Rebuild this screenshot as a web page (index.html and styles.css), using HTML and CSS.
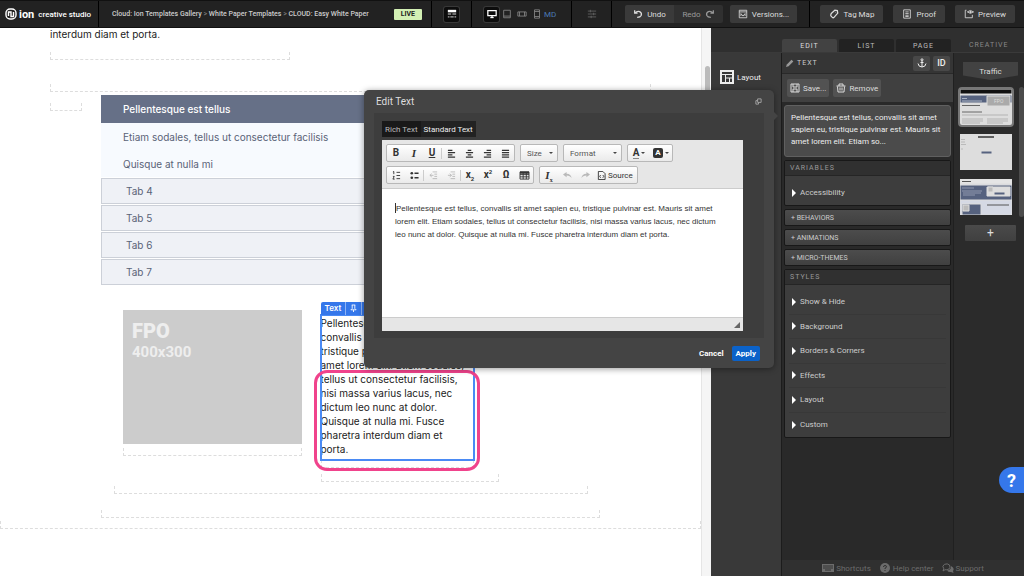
FILE: index.html
```html
<!DOCTYPE html>
<html lang="en">
<head>
  <meta charset="UTF-8" />
  <meta name="viewport" content="width=device-width, initial-scale=1.0"/>
  <title>ion creative studio</title>
  <link rel="stylesheet" href="styles.css">
</head>
<body>

  <!-- Top bar -->
  <header class="topbar">
    <div class="brand">
      <svg class="brand-mark" viewBox="0 0 12 12"><rect x="1" y="1" width="10" height="10" rx="4"/><path d="M3.500 8V4h2.500v4M6 4v4.500h2.500V4"/></svg>
      <b class="brand-name">ion</b>
      <span class="brand-sub">creative studio</span>
    </div>
    <div class="crumbs">
      <nav><a href="#">Cloud: Ion Templates Gallery</a> <i>&gt;</i> <a href="#">White Paper Templates</a> <i>&gt;</i> <a href="#">CLOUD: Easy White Paper</a></nav>
      <span class="live">LIVE</span>
    </div>
    <div class="bar-group group-view">
      <button class="icon-btn active" aria-label="Page view"><svg viewBox="0 0 12 12"><path class="fill" d="M1 1h10v3H1z"/><path d="M1 6h4M6.500 6H11M1 9.500h2M4 9.500h4M9 9.500h2"/></svg></button>
    </div>
    <div class="bar-group group-devices">
      <button class="icon-btn active" aria-label="Desktop"><svg viewBox="0 0 12 12"><path class="mid" d="M1 2h10v6H1zM6 8v2"/><path class="fill" d="M4 9.500h4v1.500H4z"/></svg></button>
      <button class="icon-btn" aria-label="Tablet"><svg viewBox="0 0 12 12"><path d="M2 1.500h8v9H2zM2 8.500h8"/></svg></button>
      <button class="icon-btn" aria-label="Phone landscape"><svg viewBox="0 0 12 12"><path d="M1 3.500h10v5H1zM3 3.500v5M9 3.500v5"/></svg></button>
      <button class="icon-btn" aria-label="Phone"><svg viewBox="0 0 12 12"><path d="M3 1h6v10H3zM3 3h6M3 9h6"/></svg></button>
      <span class="size">MD</span>
    </div>
    <div class="bar-group group-settings">
      <button class="icon-btn" aria-label="Settings"><svg viewBox="0 0 12 12"><path d="M1 2.500h10M1 6h10M1 9.500h10M4 1v3M8 4.500v3M5 8v3"/></svg></button>
    </div>
    <div class="bar-group group-history">
      <div class="joined">
        <button class="bar-btn"><svg viewBox="0 0 12 12"><path class="mid" d="M2 1.500v3.500h3.500M2.500 4.800Q5 2 8 3.200q3 1.600 1.800 4.600Q8.800 10 5 10"/></svg>Undo</button>
        <button class="bar-btn dim">Redo<svg viewBox="0 0 12 12"><path class="mid" d="M10 1.500v3.500H6.500M9.500 4.800Q7 2 4 3.200 1 4.800 2.200 7.800 3.200 10 7 10"/></svg></button>
      </div>
      <button class="bar-btn versions"><svg viewBox="0 0 12 12"><path d="M1.500 1.500h9v9h-9zM1.500 3.500h9M3.500 5.500L6 8.500 8.500 5.500M3.500 8.500v-3M8.500 8.500v-3"/></svg>Versions...</button>
    </div>
    <div class="bar-group group-actions">
      <button class="bar-btn"><svg viewBox="0 0 12 12"><path class="mid" d="M3 5l4-3.500 3 .5.500 3L6 10q-1 1-2 0L2.500 8.500q-1-1 .5-3.500zM8 4h.5"/></svg>Tag Map</button>
      <button class="bar-btn"><svg viewBox="0 0 12 12"><path d="M2 1h8v10H2zM4 3.500h4M4 5.500h4M4 7.500h4M4 9h4"/></svg>Proof</button>
      <button class="bar-btn"><svg viewBox="0 0 12 12"><path d="M3 1.500H1.500v9h8.500V7M4 3.500q3.500-3.500 7.500 0-4 3.500-7.500 0z"/><circle class="fill" cx="7.800" cy="3.500" r="1.200"/></svg>Preview</button>
    </div>
  </header>

  <div class="workspace">
    <!-- Page being edited -->
    <main class="canvas">
      <div class="page">
        <p class="lead">interdum diam et porta.</p>
        <div class="slot slot-short"></div>
        <div class="slot slot-wide"></div>
        <div class="page-grid">
          <div class="slot slot-side"></div>
          <div class="page-main">
            <div class="accordion">
              <h2>Pellentesque est tellus</h2>
              <a href="#">Etiam sodales, tellus ut consectetur facilisis</a>
              <a href="#">Quisque at nulla mi</a>
              <button>Tab 4</button>
              <button>Tab 5</button>
              <button>Tab 6</button>
              <button>Tab 7</button>
            </div>
            <div class="columns">
              <div>
                <div class="fpo"><b>FPO</b><span>400x300</span></div>
                <div class="slot slot-under"></div>
              </div>
              <div>
                <div class="selected">
                  <div class="selected-bar"><span>Text</span><span><svg viewBox="0 0 8 10"><path d="M2 1h4M2.500 1v4L1 6.500h6L5.500 5V1M4 6.500V9"/></svg></span><span></span></div>
                  <p>Pellentesque est tellus,<br>convallis sit amet sapien eu,<br>tristique pulvinar est. Mauris sit<br>amet lorem elit. Etiam sodales,<br>tellus ut consectetur facilisis,<br>nisi massa varius lacus, nec<br>dictum leo nunc at dolor.<br>Quisque at nulla mi. Fusce<br>pharetra interdum diam et<br>porta.</p>
                  <div class="callout"></div>
                </div>
                <div class="slot slot-text"></div>
                <div class="slot slot-column"></div>
              </div>
            </div>
            <div class="slot slot-inner"></div>
            <div class="slot slot-outer"></div>
          </div>
        </div>
      </div>
      <div class="slot slot-page"></div>
    </main>
    <div class="scrollbar"><div class="thumb"></div></div>

    <!-- Side panels -->
    <aside class="side">
      <div class="side-head">
        <div class="tabs">
          <button class="active">EDIT</button>
          <button>LIST</button>
          <button>PAGE</button>
        </div>
        <span class="creative-title">CREATIVE</span>
      </div>
      <div class="tools">
        <button class="tool"><svg viewBox="0 0 14 14"><path d="M1 1h12v12H1z"/><path class="thin" d="M1 4.500h12M5.500 4.500V13M5.500 8H13M9.500 8v5"/></svg>Layout</button>
      </div>
      <section class="panel">
        <div class="panel-title">
          <svg class="pencil" viewBox="0 0 8 8"><path class="fill" d="M0 8l.8-2.600L5.500.8l1.800 1.700L2.600 7.200z"/></svg>
          <span>TEXT</span>
          <button aria-label="Anchor"><svg viewBox="0 0 10 10"><circle cx="5" cy="1.800" r="1"/><path d="M5 3v6M3.500 4.500h3M1 5.500Q1.500 9 5 9t4-3.500"/></svg></button>
          <button>ID</button>
        </div>
        <div class="panel-actions">
          <button><svg viewBox="0 0 10 10"><path d="M1 1h8v8H1zM3 1v3h4V1M3 9V6h4v3"/></svg>Save...</button>
          <button><svg viewBox="0 0 10 10"><path d="M.5 3h9M3 3V1h4v2M1.500 3.500L2 9h6l.5-5.500M4 4.500v3M6 4.500v3"/></svg>Remove</button>
        </div>
        <div class="panel-body">
          <p class="excerpt">Pellentesque est tellus, convallis sit amet sapien eu, tristique pulvinar est. Mauris sit amet lorem elit. Etiam so...</p>
          <div class="box">
            <h3>VARIABLES</h3>
            <div class="box-rows one"><button>Accessibility</button></div>
          </div>
          <button class="bar-row">+ BEHAVIORS</button>
          <button class="bar-row">+ ANIMATIONS</button>
          <button class="bar-row">+ MICRO-THEMES</button>
          <div class="box">
            <h3>STYLES</h3>
            <div class="box-rows">
              <button>Show &amp; Hide</button>
              <button>Background</button>
              <button>Borders &amp; Corners</button>
              <button>Effects</button>
              <button>Layout</button>
              <button>Custom</button>
            </div>
          </div>
        </div>
      </section>
      <section class="creative">
        <button class="traffic">Traffic</button>
        <div class="thumbs">
          <button class="thumb-page current" aria-label="Page 1">
            <svg viewBox="0 0 52 36"><path fill="#ddd" d="M0 0h52v36H0z"/><path fill="#111" d="M0 0h52v5H0z"/><path fill="#56627f" d="M0 6h52v8H0z"/><path fill="#aaa" d="M27 7h23v10H27z"/><path stroke="#aab3c4" d="M2 9.500h5M2 12h20"/><path stroke="#666" d="M2 16.500h18M2 23h20"/><path stroke="#999" stroke-width=".6" d="M2 26h46M2 30h21M2 32h21M2 34h18M27 30h21M27 32h21M27 34h16"/><text class="thumb-label" x="34" y="14">FPO</text></svg>
          </button>
          <button class="thumb-page" aria-label="Page 2">
            <svg viewBox="0 0 52 36"><path fill="#ddd" d="M0 0h52v36H0z"/><path stroke="#333" stroke-width="1.500" d="M18 3h16"/><path stroke="#aaa" stroke-width=".7" d="M1 5.500h4M1 8h4M1 10.500h5M1 15h2"/><path fill="#56627f" d="M21 17h11v3H21z"/></svg>
          </button>
          <button class="thumb-page" aria-label="Page 3">
            <svg viewBox="0 0 52 36"><path fill="#d5d9e4" d="M0 0h52v36H0z"/><path fill="#e5e5e5" d="M0 0h52v5H0z"/><path fill="#56627f" d="M0 6h52v15H0zM2 25h19v11H2z"/><path fill="#ddd" d="M27 8h23v9H27z"/><path fill="#bbb" d="M28 8h5v5h-5zM3 26h6v6H3z"/><path fill="#56627f" d="M34 13h11v3H34z"/><path stroke="#aab3c4" stroke-width=".7" d="M2 9h12M2 12h20M3 14h18M3 16h12"/><path stroke="#555" d="M2 2.500h9M27 26h22"/></svg>
          </button>
        </div>
        <button class="add-page" aria-label="Add page">+</button>
        <div class="side-thumb"></div>
      </section>
      <footer class="side-foot">
        <a href="#"><svg viewBox="0 0 12 8"><path class="fill" d="M0 0h12v8H0z"/><path class="cut" d="M1 2h10M1 4h10M3 6h6"/></svg>Shortcuts</a>
        <a href="#"><svg viewBox="0 0 10 10"><circle class="fill" cx="5" cy="5" r="5"/><path class="cut" d="M3.500 4q0-1.500 1.500-1.500t1.500 1.300Q6.500 4.700 5 5.200V6M5 7v1"/></svg>Help center</a>
        <a href="#"><svg viewBox="0 0 12 10"><path d="M1 8l.8-2.200Q-.5 3 2.500 1.300q3-1.200 5 .7 1.500 2.500-.8 4.200-1.700 1-3.700.5z"/><path class="fill" d="M9 3q4 2 2 5l.5 2L9 9Q6.500 9.500 5 7.500 9.500 7 9 3z"/></svg>Support</a>
      </footer>
    </aside>
  </div>

  <!-- Edit text dialog -->
  <div class="dialog" role="dialog" aria-label="Edit Text">
    <div class="dialog-head">
      <span>Edit Text</span>
      <button aria-label="Pop out"><svg viewBox="0 0 8 8"><path d="M3 1h4v4H3zM3 3H1v4h3V5"/></svg></button>
    </div>
    <div class="dialog-body">
      <div class="mode-tabs">
        <button class="active">Rich Text</button>
        <button>Standard Text</button>
      </div>
      <div class="editor">
        <div class="editor-bar">
          <div class="tool-row">
            <div class="tool-set">
              <button class="glyph"><b>B</b></button>
              <button class="glyph serif"><i>I</i></button>
              <button class="glyph"><b><u>U</u></b></button>
              <span class="sep"></span>
              <button aria-label="Align left"><svg viewBox="0 0 10 10"><path class="line" d="M1 1.500h5M1 4h8M1 6.500h5M1 9h8"/></svg></button>
              <button aria-label="Center"><svg viewBox="0 0 10 10"><path class="line" d="M3 1.500h4M1 4h8M3 6.500h4M1 9h8"/></svg></button>
              <button aria-label="Align right"><svg viewBox="0 0 10 10"><path class="line" d="M4 1.500h5M1 4h8M4 6.500h5M1 9h8"/></svg></button>
              <button aria-label="Justify"><svg viewBox="0 0 10 10"><path class="line" d="M1 1.500h8M1 4h8M1 6.500h8M1 9h8"/></svg></button>
            </div>
            <button class="combo combo-size">Size</button>
            <button class="combo combo-format">Format</button>
            <div class="tool-set colors">
              <button class="glyph drop"><span class="text-color">A</span></button>
              <button class="glyph drop"><span class="inverse">A</span></button>
            </div>
          </div>
          <div class="tool-row">
            <div class="tool-set">
              <button aria-label="Numbered list"><svg viewBox="0 0 10 10"><path d="M5 1.500h4M5 5h4M5 8.500h4M1 1l1-.5v3M1 6h1.500L1 9h2"/></svg></button>
              <button aria-label="Bulleted list"><svg viewBox="0 0 10 10"><path class="mid" d="M5 2.500h4.500M5 7.500h4.500"/><circle class="fill" cx="2" cy="2.500" r="1.500"/><circle class="fill" cx="2" cy="7.500" r="1.500"/></svg></button>
              <span class="sep"></span>
              <button disabled aria-label="Outdent"><svg viewBox="0 0 10 10"><path d="M4 1h5M6 3.500h3M6 6h3M4 8.500h5M5 4.800H1M3 3L1 4.800 3 6.500"/></svg></button>
              <button disabled aria-label="Indent"><svg viewBox="0 0 10 10"><path d="M4 1h5M6 3.500h3M6 6h3M4 8.500h5M1 4.800h4M3 3l2 1.800L3 6.500"/></svg></button>
              <span class="sep"></span>
              <button class="glyph"><b>x<sub>2</sub></b></button>
              <button class="glyph"><b>x<sup>2</sup></b></button>
              <button class="glyph"><b>Ω</b></button>
              <button aria-label="Table"><svg class="wide" viewBox="0 0 12 10"><path d="M1 1h10v8H1zM1 4h10M1 6.500h10M4.500 2v7M8 2v7"/><path class="fill" d="M1 .5h10V3H1z"/></svg></button>
            </div>
            <div class="tool-set">
              <button class="glyph serif"><b><i>I</i><sub>x</sub></b></button>
              <button disabled aria-label="Undo"><svg viewBox="0 0 10 10"><path class="fill" d="M0 4l4-3v2q5 0 5.500 5Q8 5 4 5v2z"/></svg></button>
              <button disabled aria-label="Redo"><svg viewBox="0 0 10 10"><path class="fill" d="M10 4L6 1v2Q1 3 .5 8 2 5 6 5v2z"/></svg></button>
              <button class="source"><svg viewBox="0 0 10 10"><path d="M1.500.5h5l2.500 2.500v6.500H1.500zM4 4.500L3 6l1 1.500M6.500 4.500l1 1.500-1 1.500"/></svg>Source</button>
            </div>
          </div>
        </div>
        <div class="editor-text" contenteditable="true"><p>Pellentesque est tellus, convallis sit amet sapien eu, tristique pulvinar est. Mauris sit amet lorem elit. Etiam sodales, tellus ut consectetur facilisis, nisi massa varius lacus, nec dictum leo nunc at dolor. Quisque at nulla mi. Fusce pharetra interdum diam et porta.</p></div>
        <div class="editor-foot"><span class="grip"></span></div>
      </div>
    </div>
    <div class="dialog-foot">
      <button>Cancel</button>
      <button class="apply">Apply</button>
    </div>
  </div>

  <button class="help" aria-label="Help">?</button>

</body>
</html>
```
FILE: styles.css
```css
* { box-sizing: border-box; margin: 0; padding: 0; }

body {
  height: 100vh;
  display: flex;
  flex-direction: column;
  overflow: hidden;
  background: #2b2b2b;
  color: #ddd;
  font-family: Roboto, "Liberation Sans", sans-serif;
  font-size: 8px;
}

button {
  font: inherit;
  color: inherit;
  background: none;
  border: 0;
  cursor: pointer;
}

a { color: inherit; text-decoration: none; }

svg {
  display: block;
  flex: none;
  width: 10px;
  height: 10px;
  fill: none;
  stroke: currentColor;
  stroke-width: 1;
}

svg .fill { fill: currentColor; stroke: none; }
svg .mid { stroke-width: 1.5; }
svg .thin { stroke-width: 1; }
svg .line { stroke-width: 1.6; }

/* Top bar */
.topbar {
  flex: none;
  display: flex;
  height: 28px;
  background: #222;
  border-top: 1px solid #111;
  border-bottom: 1px solid #111;
}

.brand {
  flex: none;
  display: flex;
  align-items: center;
  gap: 2px;
  width: 98px;
  padding-left: 5px;
  color: #fff;
}

.brand-mark { width: 12px; height: 12px; stroke-width: 1.4; }
.brand-name { font-size: 11px; }
.brand-sub { margin-left: 2px; font-size: 8px; font-weight: 500; }

.crumbs {
  flex: 1;
  display: flex;
  align-items: center;
  justify-content: space-between;
  padding: 0 9px 0 13px;
  border-left: 1px solid #000;
  color: #ccc;
  font-size: 7px;
  white-space: nowrap;
}

.crumbs nav { font-weight: 500; }
.crumbs i { color: #777; font-style: normal; }

.live {
  padding: 0 7px;
  border-radius: 1px;
  background: #d3f0b4;
  color: #222;
  font-weight: 700;
  line-height: 11px;
}

.bar-group {
  flex: none;
  display: flex;
  align-items: center;
  border-left: 1px solid #000;
}

.group-view { width: 40px; justify-content: center; }
.group-devices { width: 100px; padding-left: 12px; }
.group-settings { width: 40px; justify-content: center; }
.group-history { width: 198px; padding-left: 13px; gap: 7px; }
.group-actions { width: 215px; justify-content: flex-end; padding-right: 9px; gap: 10px; }

.icon-btn {
  display: grid;
  place-items: center;
  width: 15px;
  height: 15px;
  border-radius: 2px;
  color: #888;
}

.icon-btn.active { background: #0c0c0c; box-shadow: 0 0 0 1px #383838; color: #fff; }
.group-settings .icon-btn { color: #666; }
.size { color: #4a7ab5; }

.bar-btn {
  display: flex;
  align-items: center;
  justify-content: center;
  gap: 4px;
  height: 18px;
  padding: 0 9px;
  border-radius: 2px;
  background: #3a3a3a;
  color: #ddd;
}

.joined { display: flex; }
.joined .bar-btn { width: 49px; padding: 0; border-radius: 2px 0 0 2px; }
.joined .dim { border-radius: 0 2px 2px 0; background: #303030; color: #999; }
.versions { width: 67px; padding: 0; }

/* Canvas */
.workspace { flex: 1; display: flex; min-height: 0; }

.canvas {
  flex: 1;
  min-width: 0;
  overflow: hidden;
  background: #fff;
  color: #222;
  font-family: Inter, sans-serif;
  font-size: 10px;
  line-height: 14px;
}

.page { padding: 0 50px; }
.lead { line-height: 12px; }
.slot { height: 8px; border: 1px dashed #ddd; border-top: 0; }
.slot-short { width: 240px; margin-top: 12px; }
.slot-wide { margin: 24px 0 3px; }
.slot-side { margin-top: 8px; }

.page-grid {
  display: grid;
  grid-template-columns: 32px 1fr 32px;
  gap: 19px;
}

.accordion h2,
.accordion a,
.accordion button {
  display: flex;
  align-items: center;
  width: 100%;
  height: 27px;
  padding-left: 22px;
  font-size: 10px;
  font-weight: 400;
}

.accordion h2 { height: 28px; background: #667087; color: #fff; font-weight: 500; }
.accordion a { background: #f7fafe; color: #5a6377; }

.accordion button {
  height: 26px;
  margin-top: 1px;
  padding-left: 24px;
  background: #eff1f6;
  border: 1px solid #ccd0d8;
  color: #5a6377;
}

.columns {
  display: grid;
  grid-template-columns: 1fr 1fr;
  gap: 19px;
  padding: 25px 101px 0 22px;
}

.fpo {
  display: flex;
  flex-direction: column;
  height: 134px;
  padding: 10px 9px;
  background: #ccc;
  color: #eee;
  font-family: Roboto, sans-serif;
  font-weight: 700;
}

.fpo b { font-size: 20px; line-height: 22px; }
.fpo span { font-size: 15px; line-height: 20px; }
.slot-under { margin-top: 4px; }

.selected {
  position: relative;
  width: 153px;
  margin-top: 5px;
  padding: 1px 0 4px;
  outline: 2px solid #4a8af4;
  outline-offset: -1px;
  white-space: nowrap;
}

/* Handle over the selected block */
.selected-bar {
  position: absolute;
  left: 0;
  bottom: 100%;
  display: flex;
  height: 13px;
  border-radius: 2px 2px 0 0;
  background: #3577ea;
  color: #fff;
  font-size: 8px;
  font-weight: 600;
  line-height: 13px;
}

.selected-bar span { display: grid; place-items: center; padding: 0 4px; }
.selected-bar span + span { border-left: 1px solid #8fb4f5; }
.selected-bar svg { width: 7px; height: 9px; }

.callout {
  position: absolute;
  inset: 55px -6px -11px -7px;
  border: 3px solid #f0438c;
  border-radius: 13px;
}

.slot-text { width: 153px; }
.slot-column { margin-top: 6px; }
.slot-inner { margin: 4px 12px 0 13px; }
.slot-outer { margin-top: 16px; }
.slot-page { margin-top: 3px; }

.scrollbar { flex: none; width: 10px; background: #f5f5f5; border-left: 1px solid #e5e5e5; }
.thumb { width: 5px; height: 130px; margin: 38px 0 0 3px; border-radius: 3px; background: #bbb; }

/* Side panels */
.side {
  flex: none;
  display: grid;
  grid-template: 25px 1fr 16px / 71px 172px 70px;
  width: 313px;
  background: #2a2a2a;
}

.side-head {
  grid-column: 1 / -1;
  display: flex;
  align-items: flex-end;
  background: #2f2f2f;
  border-bottom: 1px solid #3a3a3a;
  font-size: 7px;
}

.tabs { display: flex; gap: 2px; margin-left: 71px; }

.tabs button {
  width: 55px;
  height: 13px;
  border-radius: 2px 2px 0 0;
  background: #222;
  color: #bbb;
  letter-spacing: 1px;
}

.tabs .active { background: #424242; color: #ddd; }
.creative-title { flex: 1; padding: 0 0 3px 18px; color: #888; letter-spacing: 1px; line-height: 8px; }

.tools { grid-row: 2 / -1; padding: 17px 9px; background: #393939; border-right: 1px solid #1c1c1c; }
.tool { display: flex; align-items: center; gap: 3px; color: #eee; }
.tool svg { width: 14px; height: 14px; stroke-width: 2; }

.panel { background: #292929; border-right: 1px solid #202020; }

.panel-title {
  display: flex;
  align-items: center;
  gap: 3px;
  height: 21px;
  padding: 0 3px 0 4px;
  background: #353535;
  border-bottom: 1px solid #292929;
}

.panel-title .pencil { width: 8px; height: 8px; color: #999; }
.panel-title span { flex: 1; font-size: 7px; letter-spacing: 1px; color: #ccc; }

.panel-title button {
  display: grid;
  place-items: center;
  width: 17px;
  height: 15px;
  border-radius: 2px;
  background: #484848;
  color: #eee;
  font-size: 9px;
  font-weight: 500;
}

.panel-actions {
  display: flex;
  align-items: center;
  gap: 4px;
  height: 28px;
  padding: 0 5px;
  background: #404040;
}

.panel-actions button {
  display: flex;
  align-items: center;
  gap: 3px;
  height: 18px;
  padding: 0 3px;
  border-radius: 2px;
  background: #525252;
  color: #ddd;
}

.panel-body { display: grid; gap: 3px; padding: 3px 2px; }

.excerpt {
  min-height: 52px;
  padding: 6px;
  border: 1px solid #606060;
  border-radius: 3px;
  background: #4b4b4b;
  color: #eee;
  line-height: 12px;
}

.box { border: 1px solid #181818; border-radius: 2px; background: #3d3d3d; }

.box h3 {
  padding: 0 5px;
  background: #303030;
  border-bottom: 1px solid #252525;
  color: #999;
  font-size: 7px;
  font-weight: 400;
  letter-spacing: 1px;
  line-height: 14px;
}

.box-rows { display: grid; grid-auto-rows: 1fr; height: 152px; padding: 5px 4px 0; }
.box-rows.one { height: 29px; padding-top: 4px; }

.box-rows button {
  display: flex;
  align-items: center;
  gap: 4px;
  padding-left: 3px;
  border-bottom: 1px solid #383838;
  color: #ccc;
}

.box-rows button:last-child { border-bottom: 0; }

.box-rows button::before {
  content: "";
  border: 4px solid transparent;
  border-left-color: #fff;
  border-right-width: 0;
}

.bar-row {
  height: 17px;
  padding: 0 6px;
  border: 1px solid #181818;
  border-radius: 2px;
  background: linear-gradient(#4c4c4c, #404040);
  color: #ccc;
  font-size: 7px;
  text-align: left;
}

.creative { position: relative; padding: 9px 6px; background: #2b2b2b; }

.traffic {
  display: block;
  width: 55px;
  height: 18px;
  margin: 0 0 9px 3px;
  background: #424242;
  clip-path: polygon(0 0, 100% 0, 100% 75%, 50% 100%, 0 75%);
}

.thumbs { display: grid; gap: 9px; }
.thumb-page { width: 52px; height: 36px; }
.thumb-page svg { width: 100%; height: 100%; }
.thumb-label { fill: #ddd; stroke: none; font-size: 5px; }
.current { outline: 2px solid #777; border-radius: 2px; }

.add-page {
  display: block;
  width: 51px;
  height: 16px;
  margin: 10px 0 0 5px;
  border-radius: 1px;
  background: linear-gradient(#4a4a4a, #404040);
  font-size: 12px;
  line-height: 14px;
}

.side-thumb {
  position: absolute;
  top: 34px;
  right: 0;
  width: 5px;
  height: 130px;
  border-radius: 3px;
  background: #4c4c4c;
}

.side-foot {
  grid-column: 2 / -1;
  display: flex;
  align-items: center;
  justify-content: center;
  gap: 8px;
  background: #303030;
  color: #6c6c6c;
}

.side-foot a { display: flex; align-items: center; gap: 2px; }
.side-foot svg { width: 12px; }
.side-foot .cut { stroke: #303030; }

/* Dialog */
.dialog {
  position: absolute;
  top: 90px;
  left: 364px;
  width: 410px;
  padding: 0 10px;
  border-radius: 5px;
  background: #444;
  box-shadow: 0 1px 6px rgba(0, 0, 0, 0.4);
}

.dialog::after {
  content: "";
  position: absolute;
  top: 22px;
  left: 100%;
  border: 4px solid transparent;
  border-left-color: #444;
  border-right-width: 0;
}

.dialog-head {
  display: flex;
  align-items: center;
  justify-content: space-between;
  height: 23px;
  padding: 0 2px;
  font-size: 10px;
}

.dialog-head svg { width: 7px; height: 7px; color: #aaa; }
.dialog-body { padding: 8px 21px 7px 8px; background: #3d3d3d; }

.mode-tabs {
  display: flex;
  width: max-content;
  height: 16px;
  margin-bottom: 3px;
  background: #222;
  color: #eee;
}

.mode-tabs button { padding: 0 3px; }
.mode-tabs .active { background: #191919; color: #bbb; }

.editor { border-radius: 1px; overflow: hidden; background: #fff; color: #333; }

.editor-bar {
  display: grid;
  gap: 4px;
  padding: 4px;
  background: #e6e6e6;
  border-bottom: 1px solid #ccc;
}

.tool-row { display: flex; gap: 5px; }

.tool-set,
.combo {
  display: flex;
  align-items: center;
  height: 18px;
  border: 1px solid #b8b8b8;
  border-radius: 2px;
  background: linear-gradient(#fff, #eaeaea);
}

.tool-set button { display: grid; place-items: center; width: 18px; height: 16px; }
.tool-set button:disabled { opacity: 0.3; }
.tool-set svg { width: 9px; height: 9px; }
.tool-set .wide { width: 11px; }
.sep { width: 1px; height: 11px; background: #ccc; }

.glyph { font-size: 10px; line-height: 12px; }
.tool-set .serif { font-family: "Liberation Serif", serif; font-size: 11px; font-weight: 700; }
.glyph sub,
.glyph sup { font-size: 6px; line-height: 0; }

.tool-set .drop { display: flex; align-items: center; justify-content: center; gap: 2px; width: 22px; font-weight: 700; }
.text-color { border-bottom: 1px solid #888; line-height: 10px; }
.inverse { padding: 0 2px; border-radius: 2px; background: #333; color: #fff; font-size: 8px; line-height: 10px; }

.drop::after,
.combo::after {
  content: "";
  border: 2px solid transparent;
  border-top-color: #444;
  border-bottom-width: 0;
}

.tool-set .source { display: flex; align-items: center; gap: 2px; width: 43px; padding-left: 3px; }

.combo { justify-content: space-between; padding: 0 4px 0 6px; color: #555; }
.combo-size { width: 38px; }
.combo-format { width: 59px; }

.editor-text {
  min-height: 128px;
  padding: 13px 18px 12px 13px;
  font-family: "Liberation Sans", sans-serif;
  font-size: 8px;
  line-height: 13px;
}

/* text cursor */
.editor-text p::before {
  content: "";
  display: inline-block;
  width: 1px;
  height: 10px;
  background: #333;
  vertical-align: -2px;
}

.editor-foot {
  display: flex;
  align-items: flex-end;
  justify-content: flex-end;
  height: 14px;
  padding: 3px;
  background: #e6e6e6;
  border-top: 1px solid #ccc;
}

.grip { border: 3px solid #666; border-top-color: transparent; border-left-color: transparent; }

.dialog-foot {
  display: flex;
  align-items: center;
  justify-content: flex-end;
  gap: 4px;
  height: 30px;
  padding-right: 4px;
  color: #fff;
  font-weight: 700;
}

.dialog-foot button { height: 15px; padding: 0 4px; border-radius: 2px; }
.dialog-foot .apply { background: #0b62c9; }

.help {
  position: absolute;
  top: 467px;
  right: 0;
  width: 25px;
  height: 26px;
  border-radius: 13px 0 0 13px;
  background: #3577ea;
  color: #fff;
  font-size: 18px;
  font-weight: 700;
}
```
